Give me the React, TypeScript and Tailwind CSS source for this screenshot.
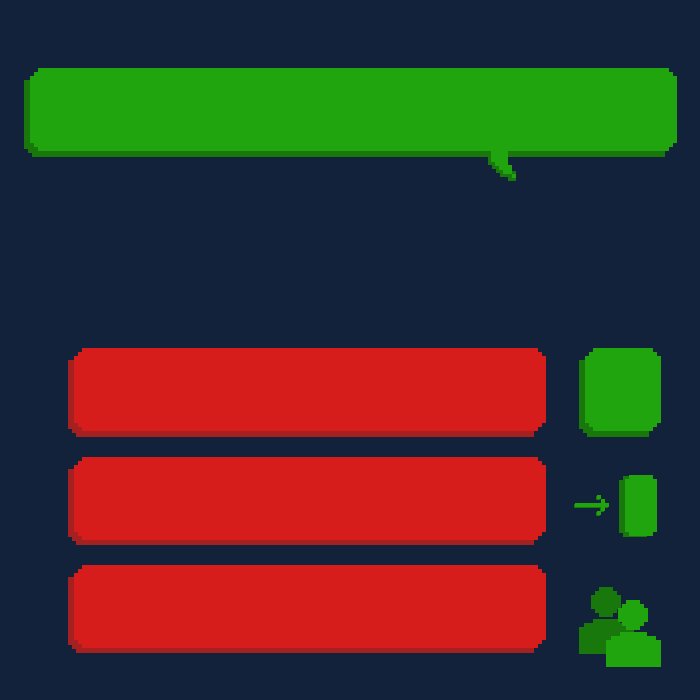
const faceClip =
  "[clip-path:polygon(8px_0,calc(100%-8px)_0,calc(100%-8px)_4px,calc(100%-4px)_4px,calc(100%-4px)_8px,100%_8px,100%_calc(100%-8px),calc(100%-4px)_calc(100%-8px),calc(100%-4px)_calc(100%-4px),calc(100%-8px)_calc(100%-4px),calc(100%-8px)_100%,8px_100%,8px_calc(100%-4px),4px_calc(100%-4px),4px_calc(100%-8px),0_calc(100%-8px),0_8px,4px_8px,4px_4px,8px_4px)]";

const shadeClip =
  "[clip-path:polygon(0_12px,0_calc(100%-8px),4px_calc(100%-8px),4px_calc(100%-4px),8px_calc(100%-4px),8px_100%,calc(100%-12px)_100%,calc(100%-12px)_12px)]";

const tones = {
  green: { face: "bg-[#21a50f]", shade: "bg-[#18780b]" },
  red: { face: "bg-[#d71c1c]", shade: "bg-[#a52020]" },
};

function Block({ tone, deep = false }: { tone: keyof typeof tones; deep?: boolean }) {
  return (
    <span className="grid w-full">
      <span className={`col-start-1 row-start-1 ${shadeClip} ${tones[tone].shade}`} />
      <span
        className={`col-start-1 row-start-1 ml-1.5 h-[83px] ${deep ? "mb-1.5" : "mb-[5px]"} ${faceClip} ${tones[tone].face}`}
      />
    </span>
  );
}

function Tail() {
  return (
    <svg
      aria-hidden="true"
      className="absolute right-[161px] top-[83px]"
      width="28"
      height="30"
      viewBox="0 0 28 30"
      shapeRendering="crispEdges"
    >
      <path fill="#18780b" d="M0 0H20V20H28V30H20V26H12V22H8V18H4V14H0Z" />
      <path fill="#21a50f" d="M3 0H20V14H24V23H28V27H24V23H15V19H11V15H7V11H3Z" />
    </svg>
  );
}

function LeaveIcon() {
  return (
    <svg aria-hidden="true" width="83" height="62" viewBox="574 475 83 62" shapeRendering="crispEdges">
      <path fill="#18780b" d="M574 504H608V508H604V512H600V508H574ZM596 496H600V500H596ZM596 512H600V516H596Z" />
      <path fill="#21a50f" d="M575 503H601V499H605V503H609V507H605V511H601V507H575ZM597 495H601V499H597ZM597 511H601V515H597Z" />
      <path fill="#18780b" d="M623 476H647V537H623V533H619V480H623Z" />
      <path fill="#21a50f" d="M629 475H653V479H657V532H653V536H629V532H625V479H629Z" />
    </svg>
  );
}

function PlayersIcon() {
  const person =
    "M20 0H34V4H38V8H42V22H38V26H34V30H20V26H16V22H12V8H16V4H20ZM14 32H41V36H50V40H55V67H0V40H5V36H14Z";
  return (
    <svg aria-hidden="true" width="82" height="80" viewBox="0 0 82 80" shapeRendering="crispEdges">
      <path fill="#18780b" d={person} />
      <path fill="#21a50f" d={person} transform="translate(27 13)" />
    </svg>
  );
}

export default function App() {
  return (
    <main className="min-h-screen bg-[#12223a] pt-[68px] font-['Liberation_Sans',sans-serif]">
      <div className="relative ml-6 mr-[23px]">
        <Block tone="green" deep />
        <Tail />
      </div>

      <div className="mt-[191px] grid grid-cols-[minmax(0,1fr)_87px] items-start gap-x-7 gap-y-5 pl-[68px] pr-[39px]">
        <button type="button" aria-label="First option" className="flex">
          <Block tone="red" deep />
        </button>
        <button type="button" aria-label="Confirm" className="flex w-[82px] justify-self-end">
          <Block tone="green" deep />
        </button>

        <button type="button" aria-label="Second option" className="flex">
          <Block tone="red" />
        </button>
        <button type="button" aria-label="Leave" className="self-end pb-2">
          <LeaveIcon />
        </button>

        <button type="button" aria-label="Third option" className="flex">
          <Block tone="red" />
        </button>
        <button type="button" aria-label="Players" className="justify-self-end pt-[22px]">
          <PlayersIcon />
        </button>
      </div>
    </main>
  );
}
